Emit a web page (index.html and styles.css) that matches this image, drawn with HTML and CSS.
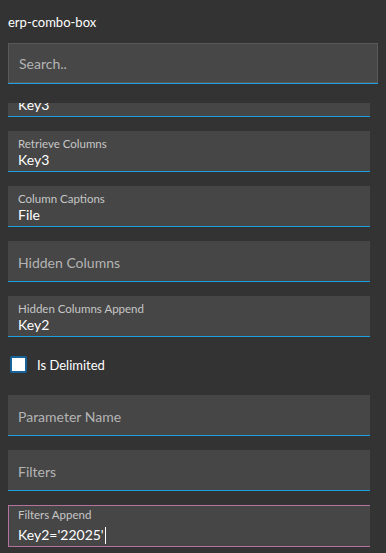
FILE: index.html
```html
<!DOCTYPE html>
<html>
<head>
<meta charset="utf-8">
<link rel="stylesheet" href="styles.css">
</head>
<body>
<div class="title">erp-combo-box</div>
<div class="search"><span class="ph">Search..</span></div>
<div class="list">
  <div class="inner">
    <div class="field"><div class="label">Display Columns</div><div class="value">Key3</div></div>
    <div class="field"><div class="label">Retrieve Columns</div><div class="value">Key3</div></div>
    <div class="field"><div class="label">Column Captions</div><div class="value">File</div></div>
    <div class="field empty"><div class="ph">Hidden Columns</div></div>
    <div class="field"><div class="label">Hidden Columns Append</div><div class="value">Key2</div></div>
    <div class="check-row"><span class="box"></span><span class="check-label">Is Delimited</span></div>
    <div class="field empty"><div class="ph">Parameter Name</div></div>
    <div class="field empty"><div class="ph">Filters</div></div>
    <div class="field focused"><div class="label">Filters Append</div><div class="value">Key2='22025'<span class="caret"></span></div></div>
  </div>
</div>
</body>
</html>
```
FILE: styles.css
```css
html, body {
  margin: 0;
  padding: 0;
  background: #333333;
  font-family: Lato, "Open Sans", sans-serif;
  color: #ffffff;
}
.title {
  padding: 14px 8px 0;
  font-size: 13px;
  line-height: 16px;
  height: 16px;
}
.search {
  margin: 13px 8px 0;
  height: 38px;
  border: 1px solid #595959;
  background: #474747;
  box-shadow: 0 1px 0 #1e9fe0;
  display: flex;
  align-items: center;
  padding-left: 10px;
  box-sizing: content-box;
  width: 358px;
}
.search .ph {
  font-size: 14px;
  color: #b4b4b4;
}
.list {
  margin: 20px 0 0 8px;
  width: 362px;
  height: 450px;
  overflow: hidden;
}
.inner {
  margin-top: -27px;
}
.field {
  height: 40px;
  background: #464646;
  border-bottom: 1px solid #1e9fe0;
  margin-bottom: 14px;
  padding: 6px 10px 0;
  box-sizing: border-box;
  height: 41px;
}
.label {
  font-size: 11.5px;
  line-height: 14px;
  color: #c6c6c6;
}
.value {
  font-size: 14px;
  line-height: 18px;
  color: #ffffff;
  display: flex;
  align-items: center;
}
.field.empty {
  padding-top: 13px;
}
.field .ph {
  font-size: 14px;
  line-height: 18px;
  color: #b4b4b4;
}
.check-row {
  display: flex;
  align-items: center;
  padding: 5px 0 8px 2px;
  margin-bottom: 14px;
}
.box {
  width: 17px;
  height: 17px;
  box-sizing: border-box;
  border: 2px solid #18649a;
  border-radius: 2px;
  background: #ffffff;
}
.check-label {
  margin-left: 10px;
  font-size: 13px;
  color: #ffffff;
}
.field.focused {
  height: 42px;
  width: 363px;
  border: 1px solid #b4739f;
  padding: 2px 9px 0;
}
.field.focused .value {
  margin-top: 4px;
}
.caret {
  display: inline-block;
  width: 1px;
  height: 17px;
  background: #ffffff;
  margin-left: 1px;
}
```
